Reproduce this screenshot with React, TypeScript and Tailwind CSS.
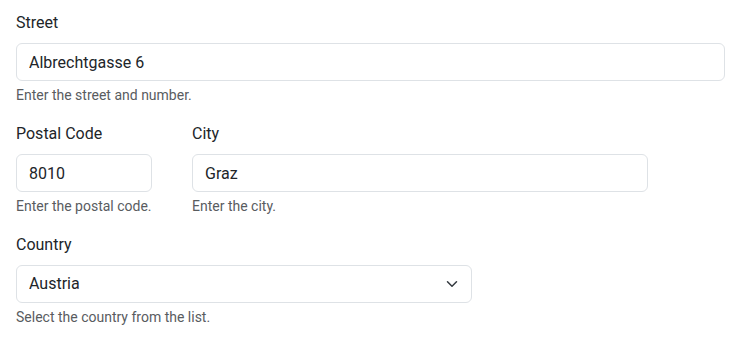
import { useState } from "react";

function Chevron() {
  return (
    <svg
      width="12"
      height="12"
      viewBox="0 0 16 16"
      fill="none"
      stroke="#343a40"
      strokeWidth="2"
      strokeLinecap="round"
      strokeLinejoin="round"
    >
      <path d="m2 5 6 6 6-6" />
    </svg>
  );
}

function Field({
  label,
  help,
  value,
  onChange,
  width,
}: {
  label: string;
  help: string;
  value: string;
  onChange: (v: string) => void;
  width: string;
}) {
  return (
    <div className={`flex flex-col ${width}`}>
      <label className="mb-2 text-base leading-6 text-[#212529]">{label}</label>
      <input
        value={value}
        onChange={(e) => onChange(e.target.value)}
        className="h-[38px] w-full rounded-md border border-[#dee2e6] bg-white px-3 text-base leading-6 text-[#212529] outline-none"
      />
      <p className="mt-1 text-sm leading-[21px] text-[#595c5f]">{help}</p>
    </div>
  );
}

export default function App() {
  const [street, setStreet] = useState("Albrechtgasse 6");
  const [zip, setZip] = useState("8010");
  const [city, setCity] = useState("Graz");
  const [country, setCountry] = useState("Austria");

  return (
    <div className="min-h-screen bg-white px-4 pt-[11px] font-['Roboto',sans-serif]">
      <form className="flex w-[709px] flex-col gap-4">
        <Field
          label="Street"
          help="Enter the street and number."
          value={street}
          onChange={setStreet}
          width="w-full"
        />

        <div className="flex gap-10">
          <Field
            label="Postal Code"
            help="Enter the postal code."
            value={zip}
            onChange={setZip}
            width="w-[136px]"
          />
          <Field
            label="City"
            help="Enter the city."
            value={city}
            onChange={setCity}
            width="w-[456px]"
          />
        </div>

        <div className="flex w-[456px] flex-col">
          <label className="mb-2 text-base leading-6 text-[#212529]">Country</label>
          <div className="relative">
            <select
              value={country}
              onChange={(e) => setCountry(e.target.value)}
              className="h-[38px] w-full appearance-none rounded-md border border-[#dee2e6] bg-white pl-3 pr-9 text-base leading-6 text-[#212529] outline-none"
            >
              <option>Austria</option>
              <option>Germany</option>
              <option>Switzerland</option>
            </select>
            <span className="pointer-events-none absolute right-[14px] top-[13px] flex">
              <Chevron />
            </span>
          </div>
          <p className="mt-1 text-sm leading-[21px] text-[#595c5f]">
            Select the country from the list.
          </p>
        </div>
      </form>
    </div>
  );
}
